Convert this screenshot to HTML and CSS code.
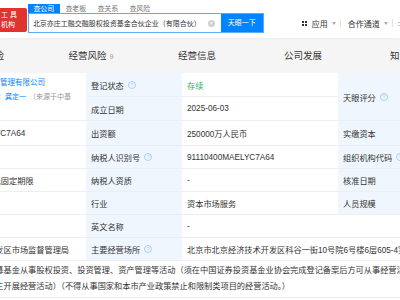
FILE: index.html
```html
<!DOCTYPE html>
<html lang="zh-CN">
  <head>
    <meta charset="UTF-8" />
    <meta name="viewport" content="width=device-width, initial-scale=1.0" />
    <title>企业信息</title>
    <link rel="stylesheet" href="styles.css">
  </head>
  <body>
    <div id="header">
      <div class="logo">
        <span>工 具</span>
        <span>机构</span>
      </div>
      <div class="searchgroup">
        <div class="searchtabs">
          <span class="stab active">查公司</span>
          <span class="stab">查老板</span>
          <span class="stab">查关系</span>
          <span class="stab">查风险</span>
        </div>
        <div class="searchbox">
          <span class="query">北京亦庄工融交融股权投资基金合伙企业（有限合伙）</span>
          <span class="clear">×</span>
          <span class="searchbtn">天眼一下</span>
        </div>
      </div>
      <div class="toplinks">
        <span class="appicon"><b></b><b></b><b></b><b></b></span>
        <span>应用</span>
        <i class="caret"></i>
        <span class="sep"></span>
        <span>合作通道</span>
        <i class="caret"></i>
        <span class="sep"></span>
        <span class="more">:</span>
      </div>
    </div>

    <div id="tabs">
      <div class="tabrow">
        <span class="tab">司法风险</span>
        <span class="tab">经营风险<em>9</em></span>
        <span class="tab">经营信息</span>
        <span class="tab">公司发展</span>
        <span class="tab">知识产权</span>
      </div>
    </div>

    <div id="info">
      <div class="cell company">
        <div class="avatar">亦庄</div>
        <div class="cominfo">
          <div class="comname">亦庄基金管理有限公司</div>
          <div class="rep">委派代表：<span class="repname">龚定一</span><span class="src">（来源于中基</span></div>
        </div>
      </div>
      <div class="label">登记状态<i class="tip">?</i></div>
      <div class="cell green">存续</div>
      <div class="label score">天眼评分<i class="tip">?</i></div>

      <div class="label">成立日期</div>
      <div class="cell">2025-06-03</div>

      <div class="cell">91110400MAELYC7A64</div>
      <div class="label">出资额</div>
      <div class="cell">250000万人民币</div>
      <div class="label">实缴资本</div>

      <div class="cell">-</div>
      <div class="label">纳税人识别号<i class="tip">?</i></div>
      <div class="cell">91110400MAELYC7A64</div>
      <div class="label">组织机构代码<i class="tip">?</i></div>

      <div class="cell">2025-06-03 至 无固定期限</div>
      <div class="label">纳税人资质</div>
      <div class="cell">-</div>
      <div class="label">核准日期</div>

      <div class="cell">-</div>
      <div class="label">行业</div>
      <div class="cell">资本市场服务</div>
      <div class="label">人员规模</div>

      <div class="cell">-</div>
      <div class="label">英文名称</div>
      <div class="cell wide">-</div>

      <div class="cell">北京经济技术开发区市场监督管理局</div>
      <div class="label">主要经营场所<i class="tip">?</i></div>
      <div class="cell wide">北京市北京经济技术开发区科谷一街10号院6号楼6层605-4室（北京自贸试验区高端产业片区亦庄组团）</div>

      <div class="cell scope">一般项目：以私募基金从事股权投资、投资管理、资产管理等活动（须在中国证券投资基金业协会完成登记备案后方可从事经营活动）。（除依法须经批准的项目外，凭<br />营业执照依法自主开展经营活动）（不得从事国家和本市产业政策禁止和限制类项目的经营活动。）</div>
    </div>
  </body>
</html>
```

FILE: styles.css
```css
body {
  margin: 0;
  overflow: hidden;
  background: #fff;
  color: #333;
  font-family: "Liberation Sans", "Noto Sans CJK SC", sans-serif;
}

#header {
  display: flex;
  align-items: flex-start;
  height: 38px;
  padding-top: 4px;
  box-sizing: border-box;
  background: #fff;
  box-shadow: 0 1px 2px rgba(0, 0, 0, 0.04);
  position: relative;
}

.logo {
  display: flex;
  flex-direction: column;
  width: 27px;
  height: 24px;
  margin-top: 4px;
  padding: 2px 0 0 1px;
  box-sizing: border-box;
  background: #e0342e;
  border-radius: 0 2px 2px 0;
  color: #fff;
  font-size: 7px;
  line-height: 10px;
}

.searchgroup {
  width: 237px;
  margin-left: 1px;
}

.searchtabs {
  display: flex;
  height: 9px;
}

.stab {
  width: 32px;
  text-align: center;
  font-size: 7px;
  line-height: 9px;
  color: #777;
}

.stab.active {
  background: #0084ff;
  color: #fff;
}

.searchbox {
  display: flex;
  align-items: center;
  height: 20px;
  border: 1px solid #5aaaf5;
  box-sizing: border-box;
}

.query {
  flex: 1;
  padding-left: 4px;
  font-size: 7px;
  color: #333;
  white-space: nowrap;
}

.clear {
  width: 7px;
  height: 7px;
  margin-right: 6px;
  border-radius: 50%;
  background: #cfcfcf;
  color: #fff;
  font-size: 6px;
  line-height: 7px;
  text-align: center;
}

.searchbtn {
  width: 42px;
  height: 100%;
  background: #0084ff;
  color: #fff;
  font-size: 7px;
  line-height: 18px;
  text-align: center;
}

.toplinks {
  display: flex;
  align-items: center;
  margin: 14px 0 0 38px;
  height: 10px;
  font-size: 8px;
  color: #333;
  white-space: nowrap;
}

.appicon {
  display: grid;
  grid-template-columns: 2px 2px;
  gap: 1px;
  margin-right: 5px;
}

.appicon b {
  width: 2px;
  height: 2px;
  background: #333;
}

.caret {
  width: 0;
  height: 0;
  margin-left: 4px;
  border-top: 3px solid #aaa;
  border-left: 2px solid transparent;
  border-right: 2px solid transparent;
}

.sep {
  width: 1px;
  height: 8px;
  margin: 0 7px 0 4px;
  background: #e2e2e2;
}

.more {
  margin-left: -2px;
}

#tabs {
  height: 35px;
  background: #f5f5f5;
  overflow: hidden;
}

.tabrow {
  display: flex;
  margin-left: -68px;
}

.tab {
  flex: 0 0 106px;
  text-align: center;
  font-size: 9.5px;
  line-height: 35px;
  color: #333;
}

.tab em {
  margin-left: 3px;
  font-style: normal;
  font-size: 7px;
  color: #999;
}

#info {
  display: grid;
  grid-template-columns: 153px 96px 156px 96px;
  grid-template-rows: 24px 24px 25px 23px 23px 23px 23px 23px 37px;
  width: 501px;
  margin-left: -67px;
  font-size: 8.2px;
}

.cell,
.label {
  display: flex;
  align-items: center;
  padding-left: 5px;
  border-bottom: 1px solid #ebeef2;
  white-space: nowrap;
  overflow: hidden;
}

.label {
  background: #f0f6fd;
}

.green {
  color: #1fae5c;
}

.wide {
  grid-column: span 2;
}

.score {
  grid-row: span 2;
}

.company {
  grid-row: span 2;
  align-items: flex-start;
  padding-top: 4px;
}

.avatar {
  flex: 0 0 28px;
  height: 28px;
  margin-right: 4px;
  border-radius: 3px;
  background: #e9f3fd;
  color: #0084ff;
  font-size: 7px;
  line-height: 28px;
  text-align: center;
}

.comname {
  font-size: 7.5px;
  line-height: 12px;
  color: #0084ff;
}

.rep {
  font-size: 7px;
  line-height: 16px;
  color: #999;
}

.repname {
  color: #0084ff;
}

.src {
  margin-left: 3px;
}

.tip {
  display: inline-block;
  width: 6px;
  height: 6px;
  margin-left: 4px;
  border: 1px solid #a9cff2;
  border-radius: 50%;
  color: #a9cff2;
  font-size: 5px;
  font-style: normal;
  line-height: 6px;
  text-align: center;
}

.scope {
  grid-column: 1 / -1;
  display: block;
  padding-top: 2px;
  line-height: 16px;
}
```
